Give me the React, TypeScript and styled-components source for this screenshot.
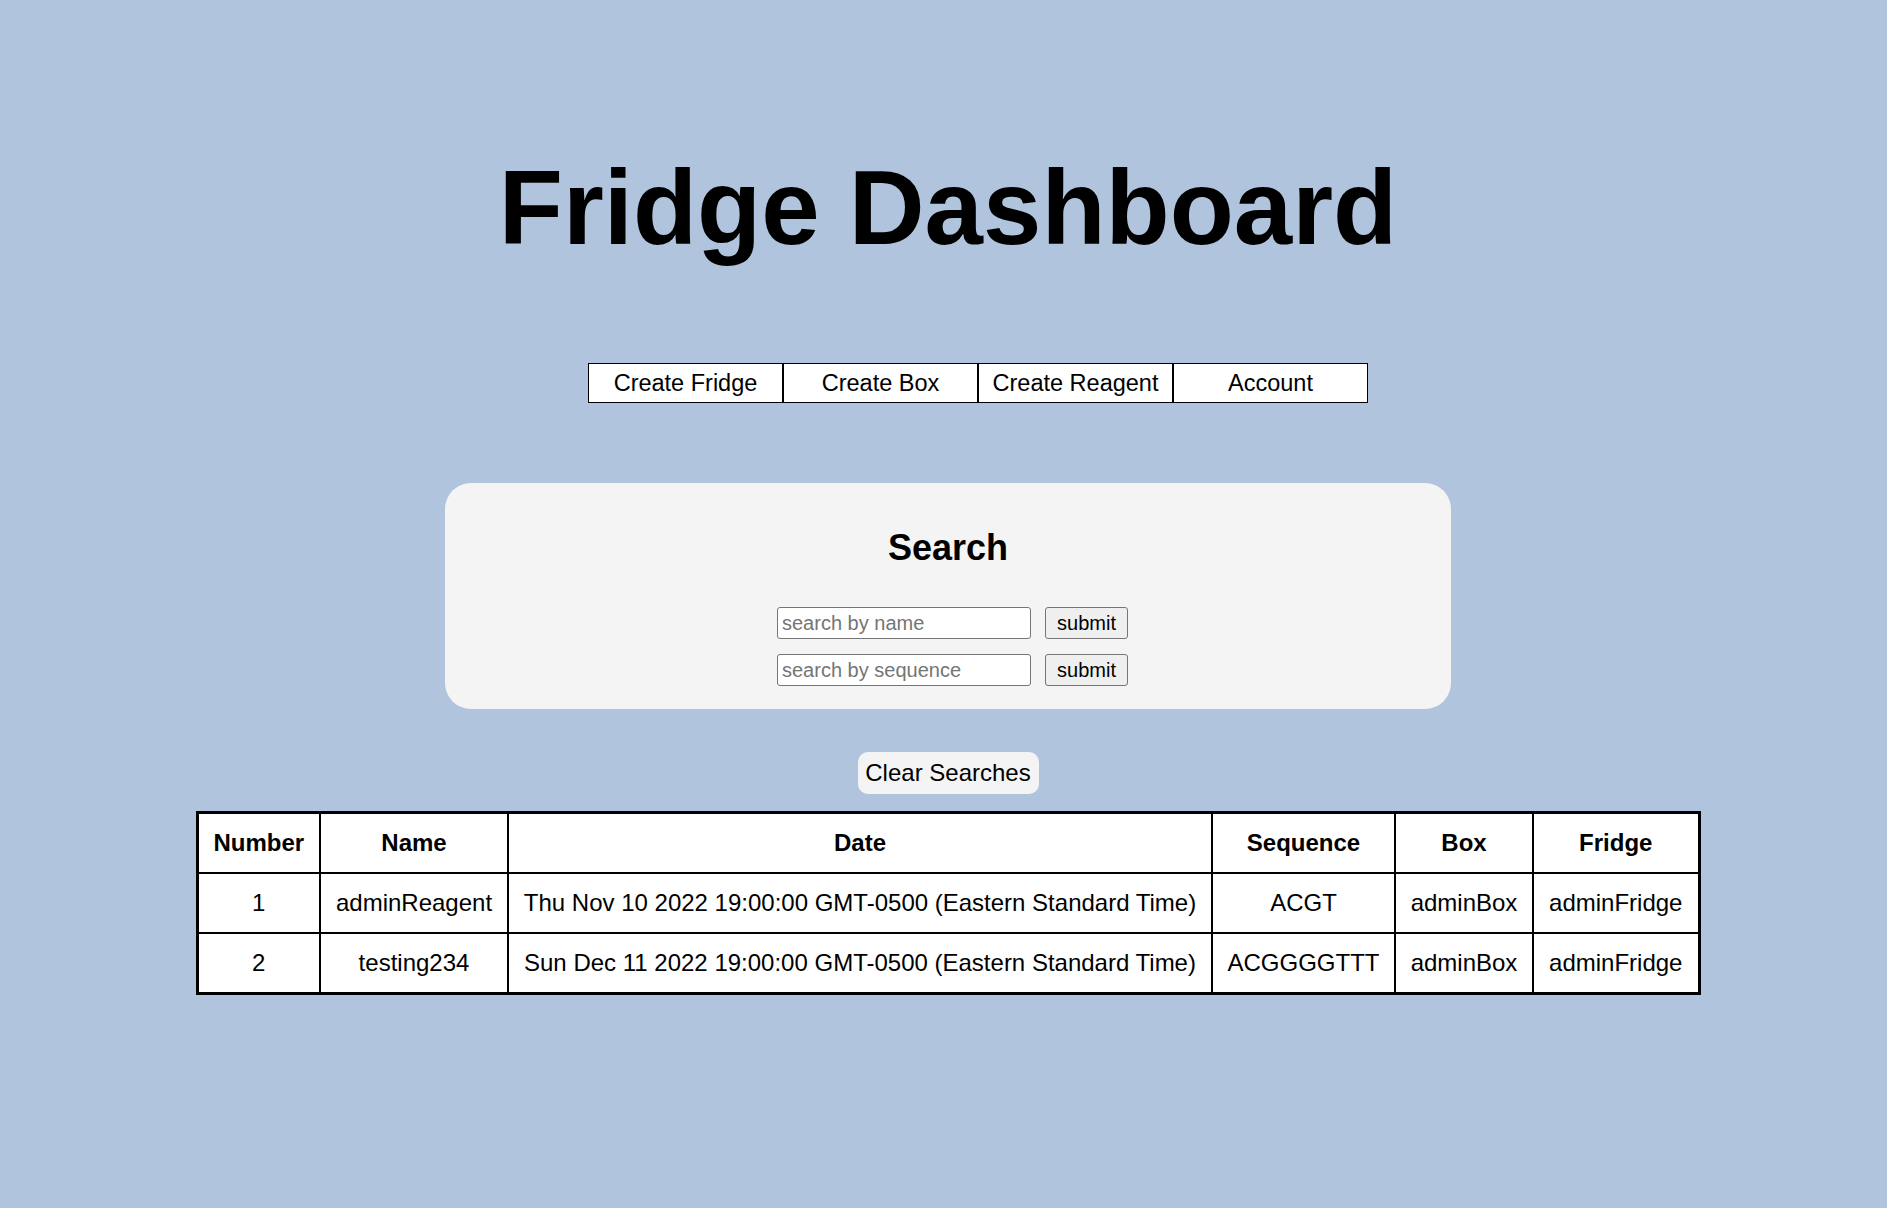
import React from "react";
import styled, { createGlobalStyle } from "styled-components";

const GlobalStyle = createGlobalStyle`
  html, body {
    margin: 0;
    padding: 0;
    background: #b0c4de;
    font-family: "Liberation Sans", Arial, sans-serif;
    color: #000;
  }
`;

const Page = styled.div`
  display: flex;
  flex-direction: column;
  align-items: center;
  padding-left: 9px;
  padding-bottom: 80px;
`;

const Title = styled.h1`
  margin: 148px 0 0;
  font-size: 105px;
  line-height: 120px;
  font-weight: 700;
  text-align: center;
`;

const Nav = styled.ul`
  display: flex;
  list-style: none;
  margin: 95px 0 0;
  padding: 0 0 0 60px;
`;

const NavItem = styled.li`
  box-sizing: border-box;
  width: 195px;
  height: 40px;
  display: flex;
  align-items: center;
  justify-content: center;
  background: #ffffff;
  border: 1px solid #000;
  font-size: 23.5px;
  cursor: pointer;
`;

const Card = styled.section`
  box-sizing: border-box;
  width: 1006px;
  margin-top: 80px;
  padding: 44px 0 23px;
  background: #f4f4f4;
  border-radius: 26px;
  display: flex;
  flex-direction: column;
  align-items: center;
`;

const CardTitle = styled.h2`
  margin: 0 0 38px;
  font-size: 36px;
  line-height: 42px;
  font-weight: 700;
`;

const SearchRow = styled.form<{ $last?: boolean }>`
  display: flex;
  gap: 14px;
  padding-left: 9px;
  margin-bottom: ${(p) => (p.$last ? "0" : "15px")};
`;

const SearchInput = styled.input`
  box-sizing: border-box;
  width: 254px;
  height: 32px;
  padding: 1px 4px;
  border: 1px solid #767676;
  border-radius: 3px;
  background: #fff;
  font-family: "Liberation Sans", Arial, sans-serif;
  font-size: 20px;
  color: #000;
  &::placeholder {
    color: #757575;
  }
`;

const SubmitButton = styled.button`
  box-sizing: border-box;
  width: 83px;
  height: 32px;
  padding: 0;
  border: 1px solid #767676;
  border-radius: 3px;
  background: #efefef;
  font-family: "Liberation Sans", Arial, sans-serif;
  font-size: 20px;
  color: #000;
`;

const ClearButton = styled.button`
  box-sizing: border-box;
  margin-top: 43px;
  width: 181px;
  height: 42px;
  padding: 0;
  border: none;
  border-radius: 10px;
  background: #f4f4f4;
  font-family: "Liberation Sans", Arial, sans-serif;
  font-size: 24px;
  color: #000;
`;

const Table = styled.table`
  margin-top: 17px;
  border-collapse: collapse;
  border: 3px solid #000;
  background: #fff;
  font-size: 24px;
`;

const HeadCell = styled.th<{ $w: number }>`
  width: ${(p) => p.$w}px;
  box-sizing: border-box;
  border: 2px solid #000;
  padding: 15px 0;
  line-height: 28px;
  font-weight: 700;
  text-align: center;
  white-space: nowrap;
`;

const Cell = styled.td`
  border: 2px solid #000;
  padding: 15px 0;
  line-height: 28px;
  text-align: center;
  white-space: nowrap;
`;

const columns = [
  { label: "Number", w: 123 },
  { label: "Name", w: 188 },
  { label: "Date", w: 704 },
  { label: "Sequence", w: 183 },
  { label: "Box", w: 138 },
  { label: "Fridge", w: 166 },
];

const rows = [
  ["1", "adminReagent", "Thu Nov 10 2022 19:00:00 GMT-0500 (Eastern Standard Time)", "ACGT", "adminBox", "adminFridge"],
  ["2", "testing234", "Sun Dec 11 2022 19:00:00 GMT-0500 (Eastern Standard Time)", "ACGGGGTTT", "adminBox", "adminFridge"],
];

export default function App() {
  return (
    <>
      <GlobalStyle />
      <Page>
        <Title>Fridge Dashboard</Title>
        <Nav>
          <NavItem>Create Fridge</NavItem>
          <NavItem>Create Box</NavItem>
          <NavItem>Create Reagent</NavItem>
          <NavItem>Account</NavItem>
        </Nav>
        <Card>
          <CardTitle>Search</CardTitle>
          <SearchRow onSubmit={(e) => e.preventDefault()}>
            <SearchInput placeholder="search by name" />
            <SubmitButton type="submit">submit</SubmitButton>
          </SearchRow>
          <SearchRow $last onSubmit={(e) => e.preventDefault()}>
            <SearchInput placeholder="search by sequence" />
            <SubmitButton type="submit">submit</SubmitButton>
          </SearchRow>
        </Card>
        <ClearButton>Clear Searches</ClearButton>
        <Table>
          <thead>
            <tr>
              {columns.map((c) => (
                <HeadCell key={c.label} $w={c.w}>
                  {c.label}
                </HeadCell>
              ))}
            </tr>
          </thead>
          <tbody>
            {rows.map((r) => (
              <tr key={r[0]}>
                {r.map((v, i) => (
                  <Cell key={i}>{v}</Cell>
                ))}
              </tr>
            ))}
          </tbody>
        </Table>
      </Page>
    </>
  );
}
